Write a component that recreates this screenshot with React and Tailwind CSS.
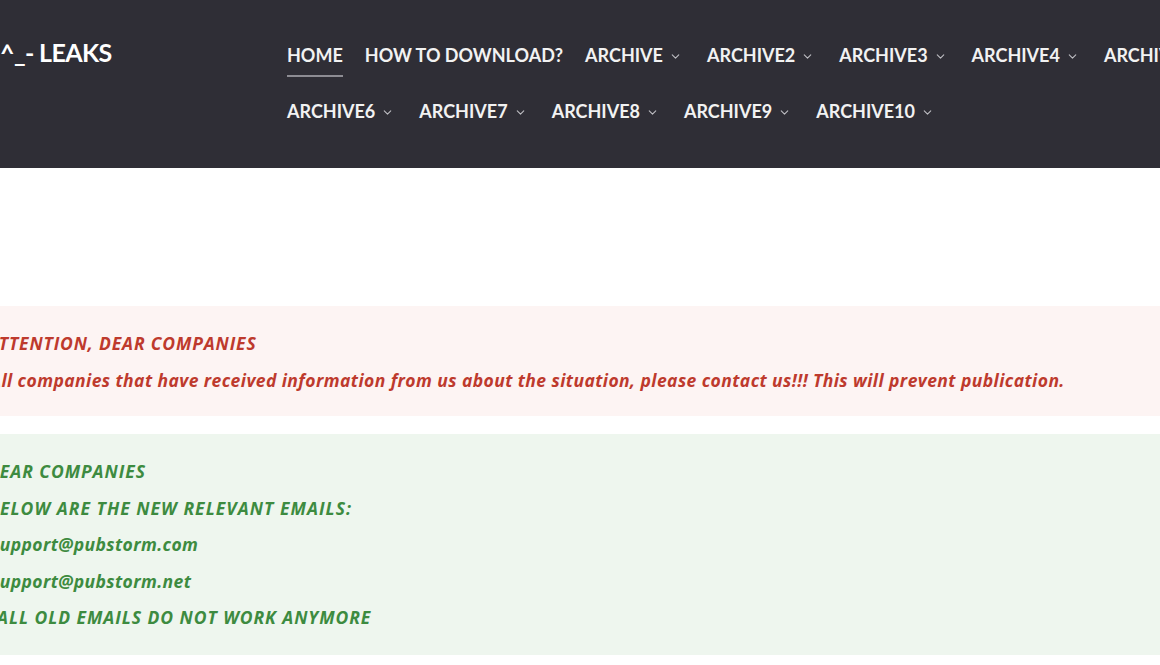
import { ChevronDown } from "lucide-react";

const row1 = [
  { label: "HOME", active: true },
  { label: "HOW TO DOWNLOAD?" },
  { label: "ARCHIVE", menu: true },
  { label: "ARCHIVE2", menu: true },
  { label: "ARCHIVE3", menu: true },
  { label: "ARCHIVE4", menu: true },
  { label: "ARCHIVE5", menu: true },
];

const row2 = ["ARCHIVE6", "ARCHIVE7", "ARCHIVE8", "ARCHIVE9", "ARCHIVE10"];

function NavItem({ label, active, menu }) {
  return (
    <a href="#" className="relative flex items-center gap-[6px] whitespace-nowrap text-[18px] font-bold text-[#f2f2f2]">
      {label}
      {menu && <ChevronDown size={13} strokeWidth={2} className="text-[#bdbdc2] mt-[2px] mr-[3px]" />}
      {active && <span className="absolute left-0 right-0 -bottom-[8px] h-[2px] bg-[#8d8c93]" />}
    </a>
  );
}

export default function App() {
  return (
    <div className="w-[1160px] h-[665px] overflow-hidden bg-white" style={{ fontFamily: "Lato, 'Open Sans', sans-serif" }}>
      {/* Header */}
      <header className="h-[168px] bg-[#2f2e36] flex">
        <div className="w-[287px] shrink-0 pt-[34px] text-[25px] font-bold text-white tracking-tight">
          ^_- LEAKS
        </div>
        <nav className="w-[980px] shrink-0 pt-[42px] flex flex-col gap-[29px]">
          <div className="flex gap-[22px]">
            {row1.map((it) => (
              <NavItem key={it.label} {...it} />
            ))}
          </div>
          <div className="flex gap-[22px]">
            {row2.map((l) => (
              <NavItem key={l} label={l} menu />
            ))}
          </div>
        </nav>
      </header>

      {/* Notices */}
      <main className="pt-[138px] flex flex-col gap-[18px] italic font-bold text-[17.5px]" style={{ fontFamily: "'Open Sans', Lato, sans-serif" }}>
        <section className="bg-[#fdf4f3] text-[#be3a2d] h-[110px] pt-[25px] flex flex-col gap-[13px]">
          <p className="-ml-[13px] leading-[24px] tracking-[0.85px]">ATTENTION, DEAR COMPANIES</p>
          <p className="-ml-[10px] leading-[24px] tracking-[0.42px] whitespace-nowrap">
            All companies that have received information from us about the situation, please contact us!!! This will prevent publication.
          </p>
        </section>
        <section className="bg-[#eef6ee] text-[#3d8b40] h-[221px] pt-[25px] flex flex-col gap-[12.5px]">
          <p className="-ml-[13px] leading-[24px] tracking-[0.95px]">DEAR COMPANIES</p>
          <p className="-ml-[12px] leading-[24px] tracking-[1.05px]">BELOW ARE THE NEW RELEVANT EMAILS:</p>
          <p className="-ml-[9px] leading-[24px] tracking-[0.4px]">support@pubstorm.com</p>
          <p className="-ml-[9px] leading-[24px] tracking-[0.4px]">support@pubstorm.net</p>
          <p className="-ml-[3px] leading-[24px] tracking-[0.95px]">ALL OLD EMAILS DO NOT WORK ANYMORE</p>
        </section>
      </main>
    </div>
  );
}
